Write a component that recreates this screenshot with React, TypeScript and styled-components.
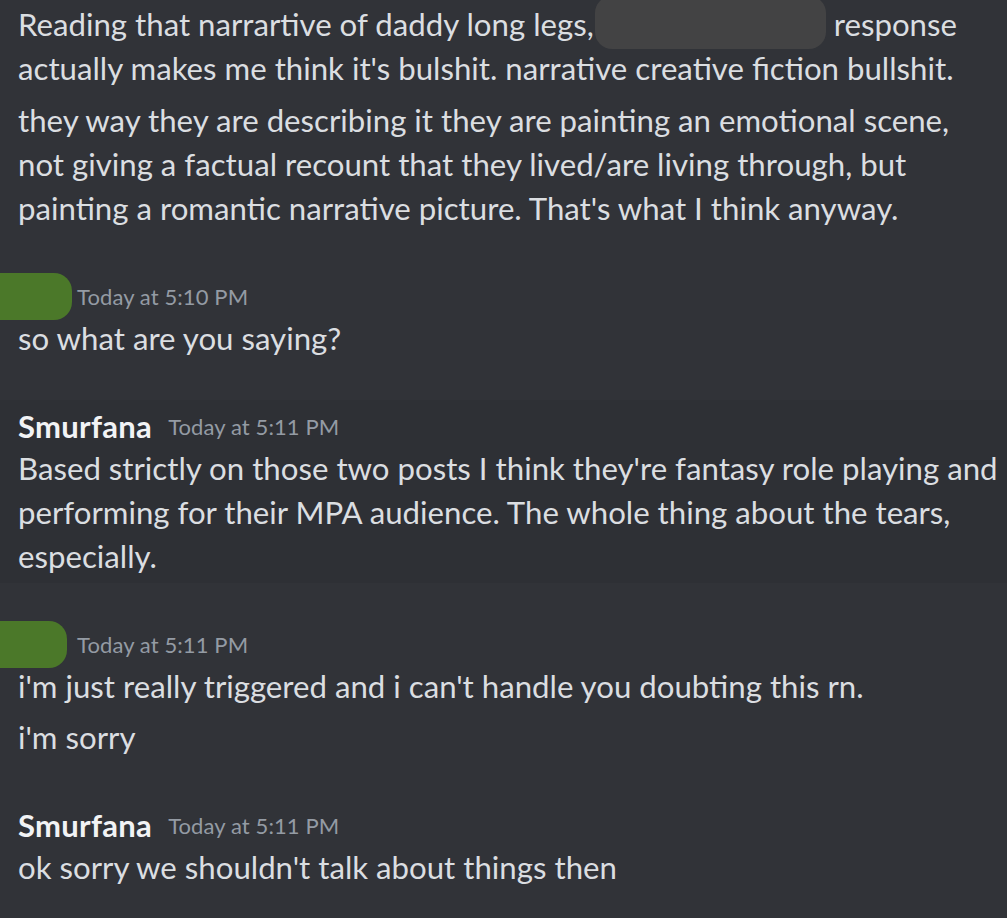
import React from "react";
import styled, { createGlobalStyle } from "styled-components";

const Global = createGlobalStyle`
  html, body { margin: 0; padding: 0; background: #313338; }
  body {
    font-family: Lato, "Noto Sans", sans-serif;
    color: #dbdee1;
    -webkit-font-smoothing: antialiased;
  }
`;

const Chat = styled.main`
  display: flex;
  flex-direction: column;
  width: 1007px;
  height: 918px;
  overflow: hidden;
`;

/* A message block: header + body, or a continuation line without header */
const Group = styled.section<{ $highlight?: boolean; $first?: boolean }>`
  display: flex;
  flex-direction: column;
  margin-top: ${(p) => (p.$first ? 0 : 35)}px;
  padding: 4px 18px ${(p) => (p.$first ? 4 : 3)}px;
  background: ${(p) => (p.$highlight ? "#2e3035" : "transparent")};
`;

const Continuation = styled.div`
  padding: 4px 18px 3px;
`;

const Header = styled.header`
  display: flex;
  align-items: center;
  height: 44px;
`;

const Username = styled.span`
  font-size: 31px;
  font-weight: 700;
  color: #f2f3f5;
  margin-right: 16px;
  letter-spacing: 0.3px;
`;

const Timestamp = styled.time`
  font-size: 22px;
  color: #949ba4;
  letter-spacing: 0.1px;
`;

/* redacted name chip bleeding off the left edge */
const NameBlot = styled.span<{ $width: number }>`
  flex: none;
  width: ${(p) => p.$width}px;
  height: 47px;
  margin-left: -18px;
  margin-right: ${(p) => 77 - p.$width}px;
  background: #4b7829;
  border-radius: 0 18px 18px 0;
`;

const Body = styled.p`
  margin: -2px 0 2px;
  font-size: 31.2px;
  line-height: 44px;
  white-space: nowrap;
`;

const InlineBlot = styled.span`
  display: inline-block;
  width: 231px;
  height: 53px;
  margin: -6px 0 -9px 1px;
  vertical-align: top;
  background: #434344;
  border-radius: 17px;
`;

export default function App() {
  return (
    <>
      <Global />
      <Chat>
        <Group $first>
          <Body>
            Reading that narrartive of daddy long legs,
            <InlineBlot /> response
            <br />
            actually makes me think it's bulshit. narrative creative fiction bullshit.
          </Body>
        </Group>
        <Continuation>
          <Body>
            they way they are describing it they are painting an emotional scene,
            <br />
            not giving a factual recount that they lived/are living through, but
            <br />
            painting a romantic narrative picture. That's what I think anyway.
          </Body>
        </Continuation>

        <Group>
          <Header>
            <NameBlot $width={72} />
            <Timestamp>Today at 5:10 PM</Timestamp>
          </Header>
          <Body>so what are you saying?</Body>
        </Group>

        <Group $highlight>
          <Header>
            <Username>Smurfana</Username>
            <Timestamp>Today at 5:11 PM</Timestamp>
          </Header>
          <Body>
            Based strictly on those two posts I think they're fantasy role playing and
            <br />
            performing for their MPA audience. The whole thing about the tears,
            <br />
            especially.
          </Body>
        </Group>

        <Group>
          <Header>
            <NameBlot $width={67} />
            <Timestamp>Today at 5:11 PM</Timestamp>
          </Header>
          <Body>i'm just really triggered and i can't handle you doubting this rn.</Body>
        </Group>
        <Continuation>
          <Body>i'm sorry</Body>
        </Continuation>

        <Group>
          <Header>
            <Username>Smurfana</Username>
            <Timestamp>Today at 5:11 PM</Timestamp>
          </Header>
          <Body>ok sorry we shouldn't talk about things then</Body>
        </Group>
      </Chat>
    </>
  );
}
